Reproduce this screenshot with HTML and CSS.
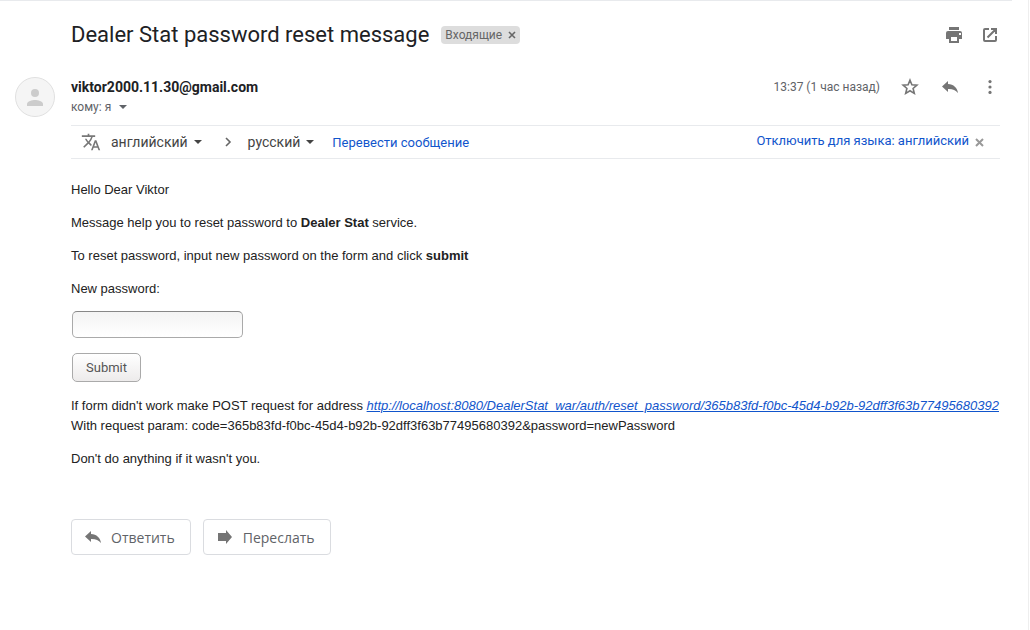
FILE: index.html
```html
<!DOCTYPE html>
<html lang="ru">
<head>
<meta charset="utf-8">
<title>Dealer Stat password reset message</title>
<link rel="stylesheet" href="styles.css">
</head>
<body>
<main class="page">
  <div class="divider"></div>
  <header class="subject">
    <h1 class="subject-title">Dealer Stat password reset message</h1>
    <span class="label">Входящие
      <button class="label-remove" type="button" aria-label="Удалить ярлык"><svg width="8" height="8" viewBox="0 0 8 8"><path d="M1 1l6 6M7 1L1 7" stroke="currentColor" stroke-width="1.6"/></svg></button>
    </span>
    <div class="subject-actions">
      <button class="icon-button" type="button" aria-label="Печать"><svg width="20" height="20" viewBox="0 0 20 20"><path fill="currentColor" d="M5 2h10v3H5zM4 6h12a2 2 0 0 1 2 2v6h-3v4H5v-4H2V8a2 2 0 0 1 2-2zm3 6v4h6v-4zm8-4v2h2V8z" fill-rule="evenodd"/></svg></button>
      <button class="icon-button" type="button" aria-label="В новом окне"><svg width="20" height="20" viewBox="0 0 20 20"><path fill="none" stroke="currentColor" stroke-width="2" d="M9 4H5a1 1 0 0 0-1 1v10a1 1 0 0 0 1 1h10a1 1 0 0 0 1-1v-4M11 4h5v5M16 4l-8.500 8.500"/></svg></button>
    </div>
  </header>

  <article class="message">
    <svg class="avatar" viewBox="0 0 40 40" aria-hidden="true"><circle cx="20" cy="20" r="19.500" fill="#f5f5f5" stroke="#e0e0e0"/><circle cx="20" cy="16" r="4" fill="#ccc"/><path fill="#ccc" d="M12 29v-2c0-2.700 5.300-4 8-4s8 1.300 8 4v2z"/></svg>
    <div class="content">
      <div class="sender-row">
        <div class="sender">
          <strong class="sender-mail">viktor2000.11.30@gmail.com</strong>
          <button class="recipient" type="button">кому: я <span class="caret"></span></button>
        </div>
        <div class="meta">
          <time class="date">13:37 (1 час назад)</time>
          <button class="icon-button" type="button" aria-label="Пометить"><svg width="20" height="20" viewBox="0 0 20 20"><path fill="none" stroke="currentColor" stroke-width="1.600" d="M10 3.200l1.900 4.600 5 .4-3.800 3.300 1.200 4.900L10 13.800l-4.300 2.600 1.200-4.900-3.800-3.300 5-.4z"/></svg></button>
          <button class="icon-button" type="button" aria-label="Ответить"><svg width="20" height="20" viewBox="0 0 20 20"><path fill="currentColor" d="M8 7V4l-6 5.500L8 15v-3c4.500-.2 7.500 1 10 4-.5-5-4.500-9-10-9z"/></svg></button>
          <button class="icon-button" type="button" aria-label="Ещё"><svg width="20" height="20" viewBox="0 0 20 20"><g fill="currentColor"><circle cx="10" cy="4.600" r="1.600"/><circle cx="10" cy="10" r="1.600"/><circle cx="10" cy="15.400" r="1.600"/></g></svg></button>
        </div>
      </div>

      <div class="translate">
        <svg class="translate-icon" width="20" height="20" viewBox="0 0 24 24" aria-hidden="true"><path fill="currentColor" d="M12.870 15.070l-2.540-2.510.03-.03A17.520 17.520 0 0 0 14.070 6H17V4h-7V2H8v2H1v2h11.170C11.500 7.920 10.440 9.750 9 11.350 8.070 10.320 7.300 9.190 6.690 8h-2c.73 1.630 1.730 3.170 2.980 4.560l-5.090 5.020L4 19l5-5 3.110 3.110.76-2.040zM18.500 10h-2L12 22h2l1.120-3h4.750L21 22h2l-4.500-12zm-2.620 7l1.620-4.330L19.120 17h-3.240z"/></svg>
        <button class="language" type="button">английский <span class="caret"></span></button>
        <svg class="arrow" width="8" height="10" viewBox="0 0 8 10" aria-hidden="true"><path d="M2 1l4 4-4 4" fill="none" stroke="currentColor" stroke-width="1.600"/></svg>
        <button class="language" type="button">русский <span class="caret"></span></button>
        <a class="translate-link" href="#">Перевести сообщение</a>
        <a class="translate-off" href="#">Отключить для языка: английский</a>
        <button class="translate-close" type="button" aria-label="Закрыть"><svg width="9" height="9" viewBox="0 0 9 9"><path d="M1 1l7 7M8 1L1 8" stroke="currentColor" stroke-width="2"/></svg></button>
      </div>

      <div class="body">
        <p>Hello Dear Viktor</p>
        <p>Message help you to reset password to <b>Dealer Stat</b> service.</p>
        <p>To reset password, input new password on the form and click <b>submit</b></p>
        <form class="form">
          <label for="password">New password:</label>
          <input class="password" id="password" type="password">
          <button class="submit" type="button">Submit</button>
        </form>
        <p>If form didn't work make POST request for address <a class="reset-link" href="#">http://localhost:8080/DealerStat_war/auth/reset_password/365b83fd-f0bc-45d4-b92b-92dff3f63b77495680392</a><br>With request param: code=365b83fd-f0bc-45d4-b92b-92dff3f63b77495680392&amp;password=newPassword</p>
        <p>Don't do anything if it wasn't you.</p>
      </div>

      <div class="replies">
        <button class="reply" type="button"><svg width="20" height="20" viewBox="0 0 20 20"><path fill="currentColor" d="M8 7V4l-6 5.500L8 15v-3c4.500-.2 7.500 1 10 4-.5-5-4.500-9-10-9z"/></svg>Ответить</button>
        <button class="reply" type="button"><svg width="20" height="20" viewBox="0 0 20 20"><path fill="currentColor" d="M3 6h8V3l6 7-6 7v-3H3z"/></svg>Переслать</button>
      </div>
    </div>
  </article>
</main>
</body>
</html>
```
FILE: styles.css
```css
* {
  box-sizing: border-box;
}

body {
  margin: 0;
  background: #fff;
  color: #222;
  font-family: Roboto, "Liberation Sans", sans-serif;
}

button {
  padding: 0;
  border: 0;
  background: none;
  color: inherit;
  font: inherit;
  cursor: pointer;
}

svg {
  display: block;
  flex: none;
}

a {
  color: #15c;
  text-decoration: none;
}

.page {
  min-height: 100vh;
  margin-right: 1px;
  border-right: 1px solid #eee;
}

.divider {
  height: 1px;
  margin-right: 16px;
  background: #e8eaed;
}

.subject {
  display: flex;
  align-items: center;
  padding: 20px 28px 0 71px;
}

.subject-title {
  margin: 0;
  color: #202124;
  font-size: 22px;
  font-weight: 400;
  line-height: 28px;
}

.label {
  display: flex;
  align-items: center;
  gap: 6px;
  height: 18px;
  margin-left: 12px;
  padding: 0 4px;
  border-radius: 4px;
  background: #ddd;
  color: #666;
  font-size: 12px;
}

.subject-actions {
  display: flex;
  gap: 16px;
  margin-left: auto;
}

.icon-button {
  color: #757575;
}

.message {
  display: grid;
  grid-template-columns: 40px minmax(0, 1fr);
  gap: 16px;
  padding: 28px 28px 0 15px;
}

.avatar {
  width: 40px;
  height: 40px;
}

.sender-row {
  display: flex;
  justify-content: space-between;
  align-items: flex-start;
  height: 48px;
}

.sender {
  display: flex;
  flex-direction: column;
  align-items: flex-start;
}

.sender-mail {
  color: #202124;
  font-size: 14px;
  line-height: 20px;
}

.recipient {
  display: flex;
  align-items: center;
  gap: 8px;
  color: #5f6368;
  font-size: 12px;
  line-height: 20px;
}

.caret {
  border: 4px solid transparent;
  border-top-color: currentColor;
  border-bottom: 0;
}

.meta {
  display: flex;
  align-items: center;
  gap: 20px;
}

.date {
  color: #5f6368;
  font-size: 12px;
}

.translate {
  display: flex;
  align-items: center;
  height: 34px;
  padding: 0 16px 0 10px;
  border: 1px solid #e8eaed;
  border-width: 1px 0;
  color: #444;
  font-size: 14px;
}

.translate-icon {
  margin-right: 10px;
  color: #777;
}

.language {
  display: flex;
  align-items: center;
  gap: 6px;
}

.arrow {
  margin: 0 16px 0 22px;
  color: #666;
}

.translate-link {
  margin-left: 18px;
  font-size: 13px;
}

.translate-off {
  margin-left: auto;
  padding-bottom: 4px;
  font-size: 13px;
}

.translate-close {
  margin-left: 6px;
  color: #999;
}

.body {
  padding-top: 8px;
  font-family: "Liberation Sans", Arial, sans-serif;
  font-size: 13px;
  line-height: 20px;
}

.body p {
  margin: 13px 0;
}

.form {
  display: flex;
  flex-direction: column;
  align-items: flex-start;
  margin-bottom: 14px;
}

.password {
  width: 171px;
  height: 27px;
  margin: 12px 1px 15px;
  padding: 4px 8px;
  border: 1px solid #aaa;
  border-top-color: #888;
  border-radius: 5px;
  background: linear-gradient(#f4f4f4, #fff);
}

.submit {
  height: 29px;
  margin-left: 1px;
  padding: 0 13px;
  border: 1px solid #aaa;
  border-radius: 5px;
  background: linear-gradient(#fff, #edebeb);
  color: #555;
  font-family: Roboto, sans-serif;
}

.reset-link {
  font-style: italic;
  text-decoration: underline;
}

.replies {
  display: flex;
  gap: 12px;
  padding-top: 37px;
}

.reply {
  display: flex;
  align-items: center;
  gap: 8px;
  height: 36px;
  padding: 0 15px 0 11px;
  border: 1px solid #dadce0;
  border-radius: 4px;
  color: #5f6368;
  font-family: "Open Sans", sans-serif;
  font-size: 14px;
  font-weight: 500;
}

.reply svg {
  color: #757575;
}
```
